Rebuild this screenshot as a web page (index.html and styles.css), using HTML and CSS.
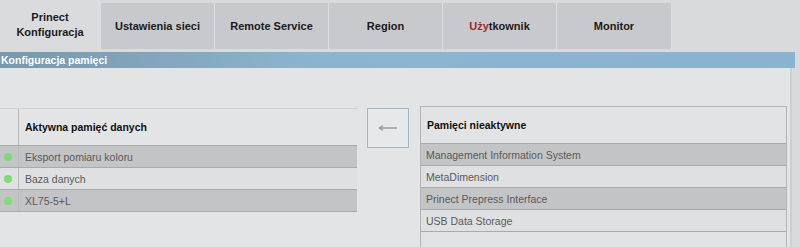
FILE: index.html
```html
<!DOCTYPE html>
<html lang="pl">
  <head>
    <meta charset="UTF-8" />
    <meta name="viewport" content="width=device-width, initial-scale=1.0" />
    <title>Prinect Konfiguracja</title>
    <link rel="stylesheet" href="styles.css">
  </head>
  <body>
    <div class="screen">
      <!-- Tabs -->
      <div class="tabs">
        <div class="tab active">Prinect<br />Konfiguracja</div>
        <div class="tab">Ustawienia sieci</div>
        <div class="tab">Remote Service</div>
        <div class="tab">Region</div>
        <div class="tab"><span class="accent">Uży</span>tkownik</div>
        <div class="tab wide">Monitor</div>
      </div>

      <!-- Section title -->
      <div class="section-bar">Konfiguracja pamięci</div>

      <div class="content">
        <!-- Active storage -->
        <div class="panel-left">
          <div class="list-head">
            <div class="mark-col"></div>
            <div class="head-text">Aktywna pamięć danych</div>
          </div>
          <div class="row dark"><div class="mark-col"><span class="dot"></span></div><div class="row-text">Eksport pomiaru koloru</div></div>
          <div class="row"><div class="mark-col"><span class="dot"></span></div><div class="row-text">Baza danych</div></div>
          <div class="row dark"><div class="mark-col"><span class="dot"></span></div><div class="row-text">XL75-5+L</div></div>
        </div>

        <button class="move-btn">
          <svg width="20" height="8" viewBox="0 0 20 8">
            <path d="M1 4 H19 M1 4 L5 1.5 M1 4 L5 6.5" stroke="#9c9d9f" stroke-width="1.3" fill="none" />
          </svg>
        </button>

        <!-- Inactive storage -->
        <div class="panel-right">
          <div class="list-head">
            <div class="head-text">Pamięci nieaktywne</div>
          </div>
          <div class="row dark"><div class="row-text">Management Information System</div></div>
          <div class="row"><div class="row-text">MetaDimension</div></div>
          <div class="row dark"><div class="row-text">Prinect Prepress Interface</div></div>
          <div class="row"><div class="row-text">USB Data Storage</div></div>
        </div>
      </div>
    </div>
  </body>
</html>
```

FILE: styles.css
```css
body {
  font-family: "Liberation Sans", Arial, sans-serif;
  background-color: #d9dadc;
  color: #222;
  margin: 0;
  padding: 0;
}

.screen {
  width: 800px;
  height: 247px;
  overflow: hidden;
}

.tabs {
  display: flex;
  height: 46px;
  padding-top: 3px;
}

.tab {
  display: flex;
  align-items: center;
  justify-content: center;
  text-align: center;
  width: 114px;
  box-sizing: border-box;
  background-color: #c8c9cc;
  border-left: 1px solid #dcdde0;
  font-size: 11px;
  font-weight: bold;
  line-height: 15px;
  color: #1a1a1a;
}

.tab.active {
  width: 100px;
  background-color: #dadbdd;
  border-left: none;
  margin-top: -3px;
}

.tab.wide {
  width: 116px;
  border-right: 1px solid #dcdde0;
}

.accent {
  color: #9a2b2b;
}

.section-bar {
  margin-top: 3px;
  width: 795px;
  height: 16px;
  line-height: 16px;
  background: linear-gradient(to right, #7898ad, #8db4cf 40%, #8ab3d0);
  color: #fff;
  font-size: 10.5px;
  font-weight: bold;
  padding-left: 1px;
  box-sizing: border-box;
}

.content {
  display: flex;
  align-items: flex-start;
  width: 792px;
  height: 179px;
  padding-top: 38px;
  box-sizing: border-box;
  background-color: #e3e4e5;
  border-right: 2px solid #cdced0;
}

.panel-left {
  width: 357px;
  margin-top: 2px;
  border-top: 1px solid #cfd0d2;
}

.list-head {
  display: flex;
  height: 36px;
  border-bottom: 1px solid #a9aaac;
}

.head-text {
  display: flex;
  align-items: center;
  padding-left: 6px;
  font-size: 10.5px;
  font-weight: bold;
  color: #111;
}

.mark-col {
  display: flex;
  align-items: center;
  justify-content: center;
  width: 18px;
  flex-shrink: 0;
  border-right: 1px solid #b9babc;
}

.row {
  display: flex;
  height: 21px;
  background-color: #dfe0e1;
  border-bottom: 1px solid #a9aaac;
}

.row.dark {
  background-color: #c3c4c6;
}

.row-text {
  display: flex;
  align-items: center;
  padding-left: 6px;
  font-size: 10.5px;
  color: #5a5a5a;
}

.dot {
  width: 8px;
  height: 8px;
  border-radius: 50%;
  background-color: #7ddc78;
  margin-left: -2px;
}

.move-btn {
  display: flex;
  align-items: center;
  justify-content: center;
  width: 42px;
  height: 40px;
  margin: 2px 11px 0 10px;
  background-color: #e7e8e9;
  border: 1px solid #a3b5c4;
  padding: 0;
  cursor: pointer;
}

.panel-right {
  width: 367px;
  height: 141px;
  box-sizing: border-box;
  background-color: #e2e3e4;
  border: 1px solid #b3b4b6;
  border-bottom: none;
}

.panel-right .row-text {
  padding-left: 5px;
}
```
